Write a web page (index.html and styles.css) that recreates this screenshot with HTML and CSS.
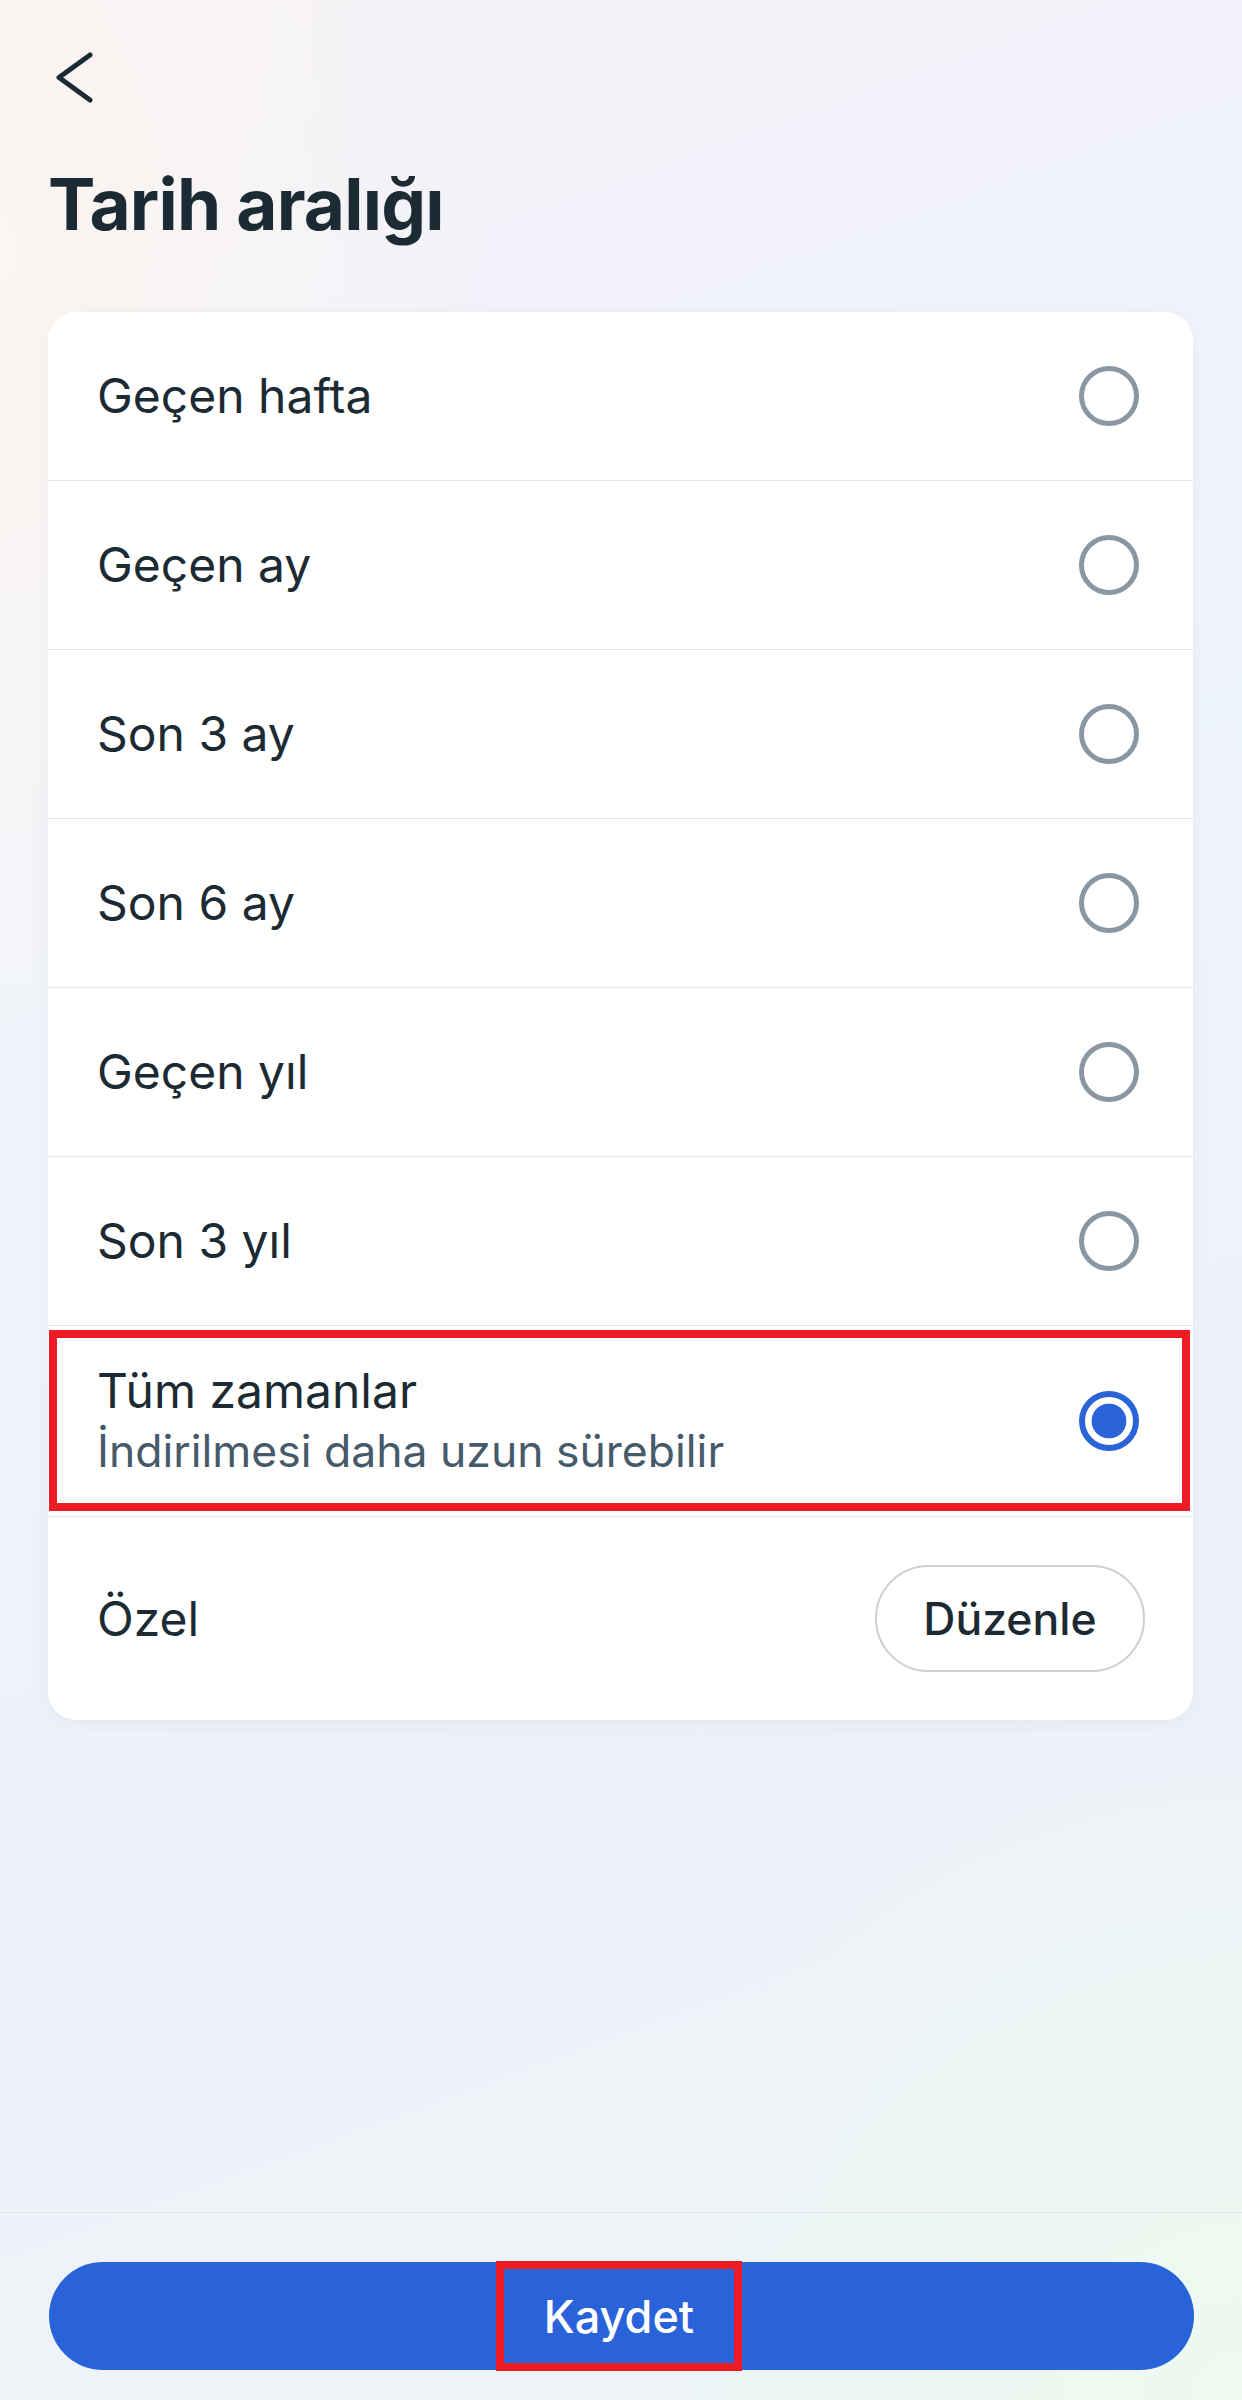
FILE: index.html
```html
<!DOCTYPE html>
<html lang="tr">
<head>
<meta charset="utf-8">
<title>Tarih aralığı</title>
<link rel="stylesheet" href="styles.css">
</head>
<body>
<div class="page">
  <header class="header">
    <button class="back" aria-label="Geri">
      <svg width="40" height="56" viewBox="0 0 40 56"><path d="M35 5 L4 27.5 L35 50" fill="none" stroke="#1c2b33" stroke-width="5" stroke-linecap="round" stroke-linejoin="round"/></svg>
    </button>
  </header>
  <h1 class="title">Tarih aralığı</h1>

  <section class="card">
    <div class="row"><span class="label">Geçen hafta</span><span class="radio"></span></div>
    <div class="row"><span class="label">Geçen ay</span><span class="radio"></span></div>
    <div class="row"><span class="label">Son 3 ay</span><span class="radio"></span></div>
    <div class="row"><span class="label">Son 6 ay</span><span class="radio"></span></div>
    <div class="row"><span class="label">Geçen yıl</span><span class="radio"></span></div>
    <div class="row"><span class="label">Son 3 yıl</span><span class="radio"></span></div>
    <div class="row row-selected">
      <div class="text-stack">
        <span class="label">Tüm zamanlar</span>
        <span class="sub">İndirilmesi daha uzun sürebilir</span>
      </div>
      <span class="radio radio-on"></span>
    </div>
    <div class="row row-custom"><span class="label">Özel</span><button class="edit">Düzenle</button></div>
  </section>

  <div class="spacer"></div>

  <footer class="footer">
    <button class="save"><span class="save-label">Kaydet</span></button>
  </footer>
</div>
</body>
</html>
```

FILE: styles.css
```css
* { box-sizing: border-box; }
html, body {
  margin: 0;
  padding: 0;
}
body {
  width: 1242px;
  height: 2400px;
  font-family: Inter, "Noto Sans", "Liberation Sans", sans-serif;
  color: #1c2b33;
  background:
    radial-gradient(ellipse 700px 1400px at 0% 10%, rgba(252,246,240,0.95) 0%, rgba(252,246,240,0) 70%),
    radial-gradient(ellipse 900px 900px at 100% 100%, rgba(236,250,238,0.9) 0%, rgba(236,250,238,0) 70%),
    linear-gradient(160deg, #f4f1f8 0%, #eef4fd 40%, #edf1fa 65%, #eef5f6 100%);
}
.page {
  height: 2400px;
  display: flex;
  flex-direction: column;
}
.header {
  padding: 50px 0 0 55px;
  height: 106px;
}
.back {
  border: 0;
  background: none;
  padding: 0;
  width: 40px;
  height: 56px;
  display: block;
}
.back svg { display: block; }
.title {
  margin: 55px 0 0 48px;
  font-size: 71px;
  line-height: 86px;
  font-weight: 700;
  letter-spacing: -0.8px;
  color: #1c2b33;
}
.card {
  margin: 65px 49px 0 48px;
  background: #fff;
  border-radius: 28px;
  box-shadow: 0 4px 18px rgba(60, 60, 90, 0.05);
}
.row {
  position: relative;
  display: flex;
  align-items: center;
  justify-content: space-between;
  height: 169px;
  padding: 0 54px 0 49px;
  border-bottom: 1.5px solid #e3e5e9;
}
.label {
  font-size: 48px;
  line-height: 58px;
  font-weight: 400;
  color: #1c2b33;
}
.radio {
  width: 60px;
  height: 60px;
  border-radius: 50%;
  border: 5px solid #8a96a2;
  flex: none;
}
.radio-on {
  border: 6px solid #2b63d9;
  background: radial-gradient(circle, #2b63d9 0, #2b63d9 17px, #fff 17.8px);
}
.row-selected {
  height: 191px;
}
.row-selected::after {
  content: "";
  position: absolute;
  left: 1px;
  right: 3px;
  top: 4px;
  bottom: 5px;
  border: 8px solid #ed1c24;
  pointer-events: none;
}
.text-stack {
  display: flex;
  flex-direction: column;
}
.text-stack .label { line-height: 61px; }
.sub {
  font-size: 44.5px;
  line-height: 61px;
  color: #465a69;
}
.row-custom {
  height: 203px;
  border-bottom: 0;
  padding-right: 48px;
}
.edit {
  width: 270px;
  height: 107px;
  border-radius: 54px;
  border: 2.5px solid #cbd0d6;
  background: #fff;
  font-family: inherit;
  font-size: 44.5px;
  font-weight: 500;
  color: #1c2b33;
  padding: 0;
}
.spacer { flex: 1; }
.footer {
  border-top: 1.5px solid #dfe1e6;
  padding: 49px 48px 30px 49px;
}
.save {
  display: flex;
  align-items: center;
  justify-content: center;
  width: 100%;
  height: 108px;
  border: 0;
  border-radius: 54px;
  background: #2a63d9;
  padding: 0;
  font-family: inherit;
}
.save-label {
  display: inline-flex;
  align-items: center;
  justify-content: center;
  width: 246px;
  height: 110px;
  margin-right: 5px;
  border: 8px solid #ed1c24;
  color: #fff;
  font-size: 45px;
  font-weight: 500;
}
```
